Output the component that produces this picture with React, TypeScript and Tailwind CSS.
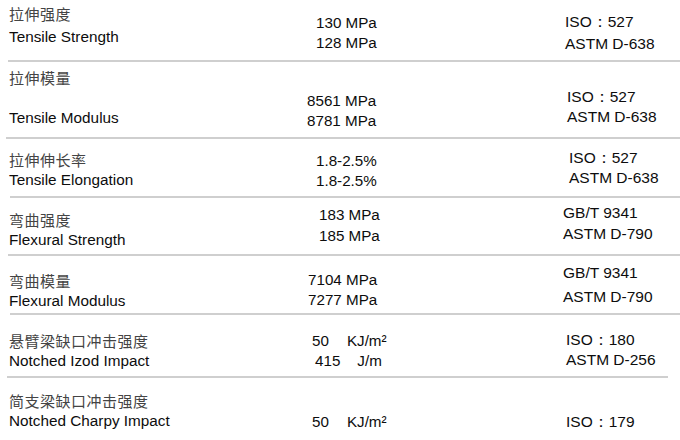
const sans = "font-['Liberation_Sans',Arial,sans-serif]";
const cjk = "font-['Noto_Sans_CJK_SC','Noto_Sans',sans-serif]";

type Row = {
  cn: string;
  en: string;
  vals: React.ReactNode[];
  stds: string[];
  h: string;
  labelBox: string;
  valBox: string;
  stdBox: string;
};

const Unit = ({ n, u, gap }: { n: string; u: React.ReactNode; gap: string }) => (
  <span className="flex">
    <span>{n}</span>
    <span className={gap}>{u}</span>
  </span>
);

const rows: Row[] = [
  {
    cn: "拉伸强度",
    en: "Tensile Strength",
    vals: ["130 MPa", "128 MPa"],
    stds: ["ISO：527", "ASTM D-638"],
    h: "h-[60px]",
    labelBox: "pt-[4px] gap-[3px]",
    valBox: "pt-[13px] gap-0 pl-[16px]",
    stdBox: "pt-[12px] gap-[2px] pl-[5px]",
  },
  {
    cn: "拉伸模量",
    en: "Tensile Modulus",
    vals: ["8561 MPa", "8781 MPa"],
    stds: ["ISO：527", "ASTM D-638"],
    h: "h-[75px]",
    labelBox: "pt-[6px] gap-[20px]",
    valBox: "pt-[29px] gap-0 pl-[7px]",
    stdBox: "pt-[25px] gap-0 pl-[7px]",
  },
  {
    cn: "拉伸伸长率",
    en: "Tensile Elongation",
    vals: ["1.8-2.5%", "1.8-2.5%"],
    stds: ["ISO：527", "ASTM D-638"],
    h: "h-[57px]",
    labelBox: "pt-[11px] gap-0",
    valBox: "pt-[12px] gap-0 pl-[16px]",
    stdBox: "pt-[9px] gap-0 pl-[9px]",
  },
  {
    cn: "弯曲强度",
    en: "Flexural Strength",
    vals: ["183 MPa", "185 MPa"],
    stds: ["GB/T 9341", "ASTM D-790"],
    h: "h-[56px]",
    labelBox: "pt-[12px] gap-0",
    valBox: "pt-[7px] gap-[1px] pl-[19px]",
    stdBox: "pt-[5px] gap-[1px] pl-[3px]",
  },
  {
    cn: "弯曲模量",
    en: "Flexural Modulus",
    vals: ["7104 MPa", "7277 MPa"],
    stds: ["GB/T 9341", "ASTM D-790"],
    h: "h-[57px]",
    labelBox: "pt-[15px] gap-0",
    valBox: "pt-[14px] gap-0 pl-[8px]",
    stdBox: "pt-[7px] gap-[4px] pl-[3px]",
  },
  {
    cn: "悬臂梁缺口冲击强度",
    en: "Notched Izod Impact",
    vals: [
      <Unit key="a" n="50" u="KJ/m²" gap="ml-[18px]" />,
      <Unit key="b" n="415" u="J/m" gap="ml-[17px]" />,
    ],
    stds: ["ISO：180", "ASTM D-256"],
    h: "h-[61px]",
    labelBox: "pt-[16px] gap-0",
    valBox: "pt-[16px] gap-0 pl-[12px] [&>span:nth-child(2)]:pl-[3px]",
    stdBox: "pt-[15px] gap-0 pl-[6px]",
  },
  {
    cn: "简支梁缺口冲击强度",
    en: "Notched Charpy Impact",
    vals: [<Unit key="c" n="50" u="KJ/m²" gap="ml-[18px]" />],
    stds: ["ISO：179"],
    h: "h-[62px]",
    labelBox: "pt-[13px] gap-0",
    valBox: "pt-[34px] gap-0 pl-[12px]",
    stdBox: "pt-[34px] gap-0 pl-[6px]",
  },
];

// grey rules under each block, left edges wobble a little like the scan
const rules = [
  "ml-[8px] mr-0",
  "ml-[6px] mr-0",
  "ml-[10px] mr-0",
  "ml-[8px] mr-0",
  "ml-[10px] mr-0",
  "ml-[7px] mr-[12px]",
];

export default function App() {
  return (
    <div className={`w-[680px] h-[440px] overflow-hidden bg-white text-[#0d0d0d] ${sans}`}>
      {rows.map((r, i) => (
        <div key={r.en}>
          <div className={`grid grid-cols-[300px_260px_1fr] ${r.h}`}>
            <div className={`flex flex-col pl-[9px] ${r.labelBox}`}>
              <span className={`text-[15px] leading-[20px] tracking-[0.5px] text-[#444] ${cjk}`}>
                {r.cn}
              </span>
              <span className="text-[15.3px] leading-[20px]">{r.en}</span>
            </div>
            <div className={`flex flex-col text-[15.2px] leading-[20px] ${r.valBox}`}>
              {r.vals.map((v, j) => (
                <span key={j}>{v}</span>
              ))}
            </div>
            <div className={`flex flex-col text-[15.5px] leading-[20px] ${r.stdBox}`}>
              {r.stds.map((s) => (
                <span key={s}>{s}</span>
              ))}
            </div>
          </div>
          {i < rules.length && <div className={`h-[2px] bg-[#cfcfcf] ${rules[i]}`} />}
        </div>
      ))}
    </div>
  );
}
